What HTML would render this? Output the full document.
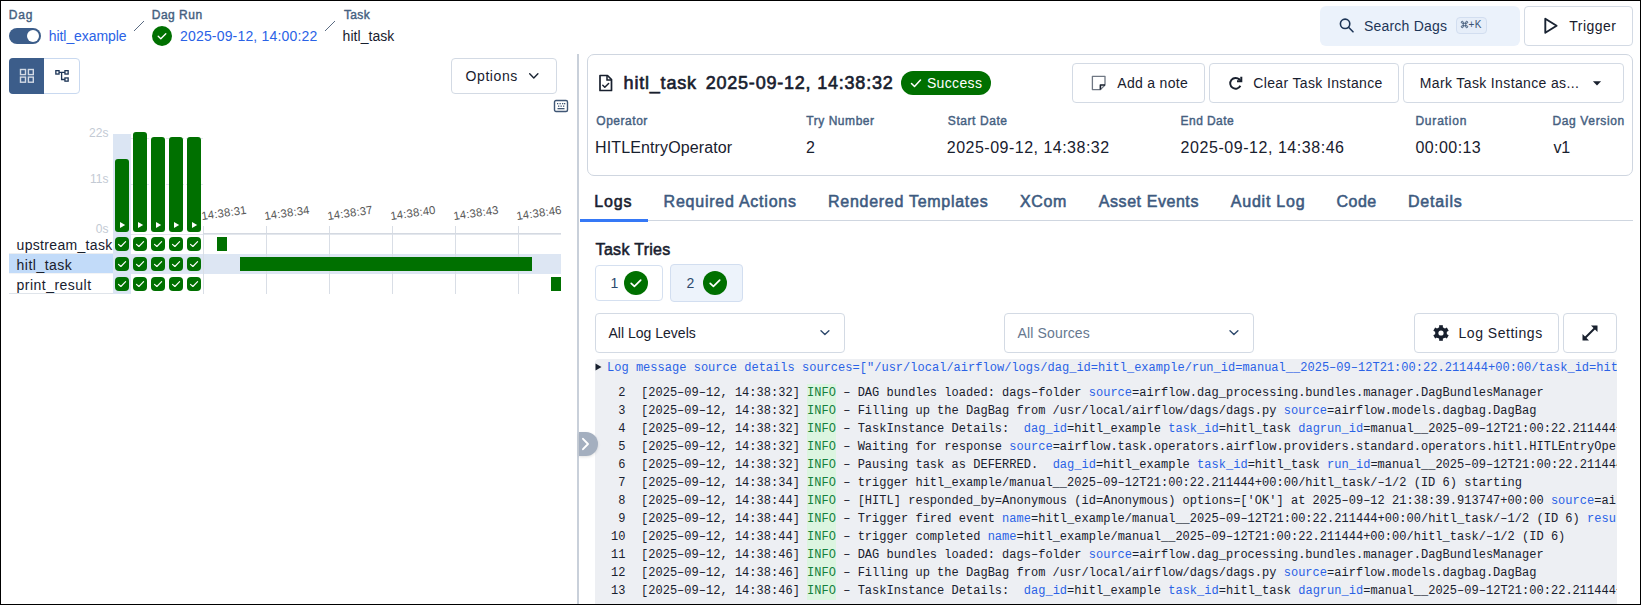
<!DOCTYPE html>
<html><head><meta charset="utf-8"><title>Airflow</title>
<style>
html,body{margin:0;padding:0;background:#fff;}
body{width:1641px;height:605px;overflow:hidden;position:relative;font-family:'Liberation Sans', sans-serif;}
.t{position:absolute;white-space:nowrap;}
.b{position:absolute;}
svg.b{overflow:visible;}
</style></head><body>
<div class="t" style="left:8.80px;top:8.84px;font-size:12px;line-height:12px;color:#45607f;font-weight:400;font-family:'Liberation Sans', sans-serif;letter-spacing:0.750px;-webkit-text-stroke:0.41px #45607f;">Dag</div>
<div class="b" style="left:9px;top:28px;width:32px;height:16px;background:#3c5d8a;border-radius:8px;"></div>
<div class="b" style="left:27px;top:30px;width:12px;height:12px;background:#fff;border-radius:50%;"></div>
<div class="t" style="left:48.80px;top:28.95px;font-size:14px;line-height:14px;color:#2a62e6;font-weight:400;font-family:'Liberation Sans', sans-serif;letter-spacing:-0.073px;">hitl_example</div>
<svg class="b" style="left:132px;top:19px;" width="14" height="14" viewBox="0 0 14 14"><line x1="2" y1="12" x2="12" y2="2" stroke="#5a6b82" stroke-width="1"/></svg>
<div class="t" style="left:151.80px;top:8.84px;font-size:12px;line-height:12px;color:#45607f;font-weight:400;font-family:'Liberation Sans', sans-serif;letter-spacing:0.483px;-webkit-text-stroke:0.41px #45607f;">Dag Run</div>
<svg class="b" style="left:152px;top:26px;" width="20" height="20" viewBox="0 0 20 20"><circle cx="10" cy="10" r="10" fill="#007000"/><path d="M6.2 10.3l2.6 2.5 5-5" fill="none" stroke="#fff" stroke-width="1.35" stroke-linecap="round" stroke-linejoin="round"/></svg>
<div class="t" style="left:180.00px;top:28.95px;font-size:14px;line-height:14px;color:#2a62e6;font-weight:400;font-family:'Liberation Sans', sans-serif;letter-spacing:0.174px;">2025-09-12, 14:00:22</div>
<svg class="b" style="left:323px;top:19px;" width="14" height="14" viewBox="0 0 14 14"><line x1="2" y1="12" x2="12" y2="2" stroke="#5a6b82" stroke-width="1"/></svg>
<div class="t" style="left:344.00px;top:8.84px;font-size:12px;line-height:12px;color:#45607f;font-weight:400;font-family:'Liberation Sans', sans-serif;letter-spacing:0.333px;-webkit-text-stroke:0.41px #45607f;">Task</div>
<div class="t" style="left:342.60px;top:28.95px;font-size:14px;line-height:14px;color:#18202e;font-weight:400;font-family:'Liberation Sans', sans-serif;letter-spacing:0.050px;">hitl_task</div>
<div class="b" style="left:1320px;top:6px;width:200px;height:40px;background:#ebf2fb;border-radius:6px;"></div>
<svg class="b" style="left:1338px;top:17px;" width="16" height="16" viewBox="0 0 16 16"><circle cx="7.1" cy="6.8" r="4.7" fill="none" stroke="#1d3557" stroke-width="1.6"/><line x1="10.5" y1="10.3" x2="15" y2="14.8" stroke="#1d3557" stroke-width="1.6" stroke-linecap="round"/></svg>
<div class="t" style="left:1364.00px;top:18.75px;font-size:14px;line-height:14px;color:#1d3557;font-weight:400;font-family:'Liberation Sans', sans-serif;letter-spacing:0.200px;">Search Dags</div>
<div class="b" style="left:1456px;top:17px;width:31px;height:17px;background:#e6eef9;border:1px solid #d2def0;border-radius:4px;box-sizing:border-box;"></div>
<svg class="b" style="left:1461px;top:20.5px;" width="7" height="7" viewBox="0 0 7 7"><g fill="none" stroke="#3a5272" stroke-width="0.9"><rect x="2.2" y="2.2" width="2.6" height="2.6"/><circle cx="1.3" cy="1.3" r="1"/><circle cx="5.7" cy="1.3" r="1"/><circle cx="1.3" cy="5.7" r="1"/><circle cx="5.7" cy="5.7" r="1"/></g></svg>
<div class="t" style="left:1468.60px;top:20.34px;font-size:10px;line-height:10px;color:#3a5272;font-weight:400;font-family:'Liberation Sans', sans-serif;letter-spacing:0.200px;">+K</div>
<div class="b" style="left:1524px;top:6px;width:109px;height:40px;background:#fff;border:1px solid #d3dae4;border-radius:4px;box-sizing:border-box;"></div>
<svg class="b" style="left:1543px;top:17px;" width="16" height="18" viewBox="0 0 16 18"><path d="M2.3 1.8 L13.6 8.8 L2.3 15.8 Z" fill="none" stroke="#1a2433" stroke-width="1.9" stroke-linejoin="round"/></svg>
<div class="t" style="left:1569.30px;top:18.95px;font-size:14px;line-height:14px;color:#18202e;font-weight:400;font-family:'Liberation Sans', sans-serif;letter-spacing:0.450px;">Trigger</div>
<div class="b" style="left:9px;top:58px;width:71px;height:36px;border:1px solid #c9d9f0;border-radius:4px;box-sizing:border-box;background:#fff;"></div>
<div class="b" style="left:9px;top:58px;width:35px;height:36px;background:#3c5d8a;border-radius:4px 0 0 4px;"></div>
<svg class="b" style="left:19px;top:68px;" width="16" height="16" viewBox="0 0 16 16"><g fill="none" stroke="#d3dae5" stroke-width="1.4"><rect x="1.5" y="1.5" width="5" height="5.1"/><rect x="9.4" y="1.5" width="4.9" height="5.1"/><rect x="1.5" y="9.1" width="5" height="5.1"/><rect x="9.4" y="9.1" width="4.9" height="5.1"/></g></svg>
<svg class="b" style="left:54px;top:69px;" width="16" height="14" viewBox="0 0 16 14"><g fill="none" stroke="#1d3557" stroke-width="1.3"><rect x="1.85" y="1.65" width="3.2" height="3.4"/><rect x="10.95" y="1.65" width="3.2" height="3.4"/><rect x="10.95" y="8.95" width="3.2" height="3.2"/><path d="M5.05 3.3H10.95M7.6 3.3V10.5H10.95"/></g></svg>
<div class="b" style="left:451px;top:58px;width:106px;height:36px;background:#fff;border:1px solid #d3dae4;border-radius:4px;box-sizing:border-box;"></div>
<div class="t" style="left:465.60px;top:69.15px;font-size:14px;line-height:14px;color:#18202e;font-weight:400;font-family:'Liberation Sans', sans-serif;letter-spacing:0.567px;">Options</div>
<svg class="b" style="left:527px;top:71px;" width="14" height="10" viewBox="0 0 14 10"><path d="M2.7 2.7L6.8 6.9L10.9 2.7" fill="none" stroke="#1a2433" stroke-width="1.4" stroke-linecap="round" stroke-linejoin="round"/></svg>
<svg class="b" style="left:553px;top:99px;" width="16" height="14" viewBox="0 0 16 14"><rect x="1.5" y="1.5" width="13" height="11" rx="1.5" fill="none" stroke="#3f5675" stroke-width="1.4"/><g fill="#3f5675"><rect x="4" y="4" width="1.3" height="1.3"/><rect x="6.5" y="4" width="1.3" height="1.3"/><rect x="9" y="4" width="1.3" height="1.3"/><rect x="11" y="4" width="1.3" height="1.3"/><rect x="5" y="6.5" width="1.3" height="1.3"/><rect x="7.5" y="6.5" width="1.3" height="1.3"/><rect x="10" y="6.5" width="1.3" height="1.3"/><rect x="4.5" y="9" width="7" height="1.3"/></g></svg>
<div class="b" style="left:577px;top:54px;width:2px;height:551px;background:#c9d0da;"></div>
<div class="t" style="right:1532.6px;top:127.14px;font-size:12px;line-height:12px;color:#c3cad4;font-family:'Liberation Sans', sans-serif;">22s</div>
<div class="t" style="right:1532.6px;top:172.94px;font-size:12px;line-height:12px;color:#c3cad4;font-family:'Liberation Sans', sans-serif;">11s</div>
<div class="t" style="right:1532.6px;top:222.54px;font-size:12px;line-height:12px;color:#c3cad4;font-family:'Liberation Sans', sans-serif;">0s</div>
<div class="b" style="left:131px;top:138px;width:72px;height:1px;background:repeating-linear-gradient(90deg,#e3e7ed 0 3px,transparent 3px 5px);"></div>
<div class="b" style="left:131px;top:184px;width:72px;height:1px;background:repeating-linear-gradient(90deg,#e3e7ed 0 3px,transparent 3px 5px);"></div>
<div class="b" style="left:113px;top:134px;width:18px;height:160px;background:#dbe5f3;"></div>
<div class="b" style="left:131px;top:254px;width:430px;height:20px;background:#dde6f3;"></div>
<div class="b" style="left:9px;top:254px;width:104px;height:20px;background:#c2dbf9;"></div>
<div class="b" style="left:9px;top:293px;width:104px;height:1px;background:#dfe4ea;"></div>
<div class="b" style="left:9px;top:253px;width:104px;height:1px;background:#eceef1;"></div>
<div class="b" style="left:9px;top:273px;width:104px;height:1px;background:#f3f4f6;"></div>
<div class="b" style="left:131px;top:234px;width:430px;height:1px;background:#e3e7ed;"></div>
<div class="b" style="left:115px;top:159px;width:14px;height:72.6px;background:#007000;border-radius:3px;"></div>
<svg class="b" style="left:120px;top:222px;" width="6" height="7" viewBox="0 0 6 7"><path d="M0 0L5.2 3L0 6Z" fill="#fff"/></svg>
<div class="b" style="left:133px;top:132px;width:14px;height:99.6px;background:#007000;border-radius:3px;"></div>
<svg class="b" style="left:138px;top:222px;" width="6" height="7" viewBox="0 0 6 7"><path d="M0 0L5.2 3L0 6Z" fill="#fff"/></svg>
<div class="b" style="left:151px;top:137px;width:14px;height:94.6px;background:#007000;border-radius:3px;"></div>
<svg class="b" style="left:156px;top:222px;" width="6" height="7" viewBox="0 0 6 7"><path d="M0 0L5.2 3L0 6Z" fill="#fff"/></svg>
<div class="b" style="left:169px;top:137px;width:14px;height:94.6px;background:#007000;border-radius:3px;"></div>
<svg class="b" style="left:174px;top:222px;" width="6" height="7" viewBox="0 0 6 7"><path d="M0 0L5.2 3L0 6Z" fill="#fff"/></svg>
<div class="b" style="left:187px;top:137px;width:14px;height:94.6px;background:#007000;border-radius:3px;"></div>
<svg class="b" style="left:192px;top:222px;" width="6" height="7" viewBox="0 0 6 7"><path d="M0 0L5.2 3L0 6Z" fill="#fff"/></svg>
<svg class="b" style="left:115px;top:237px;" width="14" height="14" viewBox="0 0 14 14"><rect width="14" height="14" rx="4" fill="#007000"/><path d="M3.5 7.3l2.4 2.2 4.7-4.8" fill="none" stroke="#fff" stroke-width="1.15" stroke-linecap="round" stroke-linejoin="round"/></svg>
<svg class="b" style="left:133px;top:237px;" width="14" height="14" viewBox="0 0 14 14"><rect width="14" height="14" rx="4" fill="#007000"/><path d="M3.5 7.3l2.4 2.2 4.7-4.8" fill="none" stroke="#fff" stroke-width="1.15" stroke-linecap="round" stroke-linejoin="round"/></svg>
<svg class="b" style="left:151px;top:237px;" width="14" height="14" viewBox="0 0 14 14"><rect width="14" height="14" rx="4" fill="#007000"/><path d="M3.5 7.3l2.4 2.2 4.7-4.8" fill="none" stroke="#fff" stroke-width="1.15" stroke-linecap="round" stroke-linejoin="round"/></svg>
<svg class="b" style="left:169px;top:237px;" width="14" height="14" viewBox="0 0 14 14"><rect width="14" height="14" rx="4" fill="#007000"/><path d="M3.5 7.3l2.4 2.2 4.7-4.8" fill="none" stroke="#fff" stroke-width="1.15" stroke-linecap="round" stroke-linejoin="round"/></svg>
<svg class="b" style="left:187px;top:237px;" width="14" height="14" viewBox="0 0 14 14"><rect width="14" height="14" rx="4" fill="#007000"/><path d="M3.5 7.3l2.4 2.2 4.7-4.8" fill="none" stroke="#fff" stroke-width="1.15" stroke-linecap="round" stroke-linejoin="round"/></svg>
<svg class="b" style="left:115px;top:257px;" width="14" height="14" viewBox="0 0 14 14"><rect width="14" height="14" rx="4" fill="#007000"/><path d="M3.5 7.3l2.4 2.2 4.7-4.8" fill="none" stroke="#fff" stroke-width="1.15" stroke-linecap="round" stroke-linejoin="round"/></svg>
<svg class="b" style="left:133px;top:257px;" width="14" height="14" viewBox="0 0 14 14"><rect width="14" height="14" rx="4" fill="#007000"/><path d="M3.5 7.3l2.4 2.2 4.7-4.8" fill="none" stroke="#fff" stroke-width="1.15" stroke-linecap="round" stroke-linejoin="round"/></svg>
<svg class="b" style="left:151px;top:257px;" width="14" height="14" viewBox="0 0 14 14"><rect width="14" height="14" rx="4" fill="#007000"/><path d="M3.5 7.3l2.4 2.2 4.7-4.8" fill="none" stroke="#fff" stroke-width="1.15" stroke-linecap="round" stroke-linejoin="round"/></svg>
<svg class="b" style="left:169px;top:257px;" width="14" height="14" viewBox="0 0 14 14"><rect width="14" height="14" rx="4" fill="#007000"/><path d="M3.5 7.3l2.4 2.2 4.7-4.8" fill="none" stroke="#fff" stroke-width="1.15" stroke-linecap="round" stroke-linejoin="round"/></svg>
<svg class="b" style="left:187px;top:257px;" width="14" height="14" viewBox="0 0 14 14"><rect width="14" height="14" rx="4" fill="#007000"/><path d="M3.5 7.3l2.4 2.2 4.7-4.8" fill="none" stroke="#fff" stroke-width="1.15" stroke-linecap="round" stroke-linejoin="round"/></svg>
<svg class="b" style="left:115px;top:277px;" width="14" height="14" viewBox="0 0 14 14"><rect width="14" height="14" rx="4" fill="#007000"/><path d="M3.5 7.3l2.4 2.2 4.7-4.8" fill="none" stroke="#fff" stroke-width="1.15" stroke-linecap="round" stroke-linejoin="round"/></svg>
<svg class="b" style="left:133px;top:277px;" width="14" height="14" viewBox="0 0 14 14"><rect width="14" height="14" rx="4" fill="#007000"/><path d="M3.5 7.3l2.4 2.2 4.7-4.8" fill="none" stroke="#fff" stroke-width="1.15" stroke-linecap="round" stroke-linejoin="round"/></svg>
<svg class="b" style="left:151px;top:277px;" width="14" height="14" viewBox="0 0 14 14"><rect width="14" height="14" rx="4" fill="#007000"/><path d="M3.5 7.3l2.4 2.2 4.7-4.8" fill="none" stroke="#fff" stroke-width="1.15" stroke-linecap="round" stroke-linejoin="round"/></svg>
<svg class="b" style="left:169px;top:277px;" width="14" height="14" viewBox="0 0 14 14"><rect width="14" height="14" rx="4" fill="#007000"/><path d="M3.5 7.3l2.4 2.2 4.7-4.8" fill="none" stroke="#fff" stroke-width="1.15" stroke-linecap="round" stroke-linejoin="round"/></svg>
<svg class="b" style="left:187px;top:277px;" width="14" height="14" viewBox="0 0 14 14"><rect width="14" height="14" rx="4" fill="#007000"/><path d="M3.5 7.3l2.4 2.2 4.7-4.8" fill="none" stroke="#fff" stroke-width="1.15" stroke-linecap="round" stroke-linejoin="round"/></svg>
<div class="t" style="left:16.60px;top:237.85px;font-size:14px;line-height:14px;color:#18202e;font-weight:400;font-family:'Liberation Sans', sans-serif;letter-spacing:0.317px;">upstream_task</div>
<div class="t" style="left:16.60px;top:257.85px;font-size:14px;line-height:14px;color:#18202e;font-weight:400;font-family:'Liberation Sans', sans-serif;letter-spacing:0.475px;">hitl_task</div>
<div class="t" style="left:16.60px;top:277.65px;font-size:14px;line-height:14px;color:#18202e;font-weight:400;font-family:'Liberation Sans', sans-serif;letter-spacing:0.473px;">print_result</div>
<div class="b" style="left:203px;top:226px;width:1px;height:68px;background:#d9dee6;"></div>
<div class="b" style="left:266px;top:226px;width:1px;height:68px;background:#d9dee6;"></div>
<div class="b" style="left:329px;top:226px;width:1px;height:68px;background:#d9dee6;"></div>
<div class="b" style="left:392px;top:226px;width:1px;height:68px;background:#d9dee6;"></div>
<div class="b" style="left:455px;top:226px;width:1px;height:68px;background:#d9dee6;"></div>
<div class="b" style="left:518px;top:226px;width:1px;height:68px;background:#d9dee6;"></div>
<div class="b" style="left:203px;top:233px;width:358px;height:1px;background:#d4d9e1;"></div>
<div class="b" style="left:217px;top:237px;width:10px;height:14px;background:#007000;"></div>
<div class="b" style="left:240px;top:257px;width:292px;height:14px;background:#007000;"></div>
<div class="b" style="left:551px;top:277px;width:10px;height:14px;background:#007000;"></div>
<div class="t" style="left:202px;top:210.97px;font-size:11.5px;line-height:11.5px;color:#585858;letter-spacing:0.1px;font-family:'Liberation Sans', sans-serif;transform-origin:0 9.73px;transform:rotate(-8deg);">14:38:31</div>
<div class="t" style="left:265px;top:210.97px;font-size:11.5px;line-height:11.5px;color:#585858;letter-spacing:0.1px;font-family:'Liberation Sans', sans-serif;transform-origin:0 9.73px;transform:rotate(-8deg);">14:38:34</div>
<div class="t" style="left:328px;top:210.97px;font-size:11.5px;line-height:11.5px;color:#585858;letter-spacing:0.1px;font-family:'Liberation Sans', sans-serif;transform-origin:0 9.73px;transform:rotate(-8deg);">14:38:37</div>
<div class="t" style="left:391px;top:210.97px;font-size:11.5px;line-height:11.5px;color:#585858;letter-spacing:0.1px;font-family:'Liberation Sans', sans-serif;transform-origin:0 9.73px;transform:rotate(-8deg);">14:38:40</div>
<div class="t" style="left:454px;top:210.97px;font-size:11.5px;line-height:11.5px;color:#585858;letter-spacing:0.1px;font-family:'Liberation Sans', sans-serif;transform-origin:0 9.73px;transform:rotate(-8deg);">14:38:43</div>
<div class="t" style="left:517px;top:210.97px;font-size:11.5px;line-height:11.5px;color:#585858;letter-spacing:0.1px;font-family:'Liberation Sans', sans-serif;transform-origin:0 9.73px;transform:rotate(-8deg);">14:38:46</div>
<div class="b" style="left:587px;top:54px;width:1046px;height:122px;border:1px solid #cfd6e0;border-radius:7px;box-sizing:border-box;"></div>
<svg class="b" style="left:597px;top:73px;" width="18" height="20" viewBox="0 0 18 20"><path d="M3 2.5h7.5l4 4v11h-11.5z" fill="none" stroke="#18202e" stroke-width="1.7" stroke-linejoin="round"/><path d="M10 2.5v4.5h4.5" fill="none" stroke="#18202e" stroke-width="1.5"/><path d="M5.8 12.3l2 2 3.8-3.8" fill="none" stroke="#18202e" stroke-width="1.5" stroke-linecap="round" stroke-linejoin="round"/></svg>
<div class="t" style="left:623.60px;top:74.06px;font-size:18px;line-height:18px;color:#18202e;font-weight:400;font-family:'Liberation Sans', sans-serif;letter-spacing:0.800px;-webkit-text-stroke:0.62px #18202e;">hitl_task</div>
<div class="t" style="left:705.70px;top:74.06px;font-size:18px;line-height:18px;color:#18202e;font-weight:400;font-family:'Liberation Sans', sans-serif;letter-spacing:0.784px;-webkit-text-stroke:0.62px #18202e;">2025-09-12, 14:38:32</div>
<div class="b" style="left:901px;top:71px;width:90px;height:24px;background:#007000;border-radius:12px;"></div>
<svg class="b" style="left:909px;top:76px;" width="14" height="14" viewBox="0 0 14 14"><path d="M2.5 7.5l3 3 6-6.5" fill="none" stroke="#fff" stroke-width="1.5" stroke-linecap="round" stroke-linejoin="round"/></svg>
<div class="t" style="left:926.90px;top:76.05px;font-size:14px;line-height:14px;color:#fff;font-weight:400;font-family:'Liberation Sans', sans-serif;letter-spacing:0.350px;">Success</div>
<div class="b" style="left:1072px;top:63px;width:133px;height:40px;background:#fff;border:1px solid #d3dae4;border-radius:4px;box-sizing:border-box;"></div>
<svg class="b" style="left:1090px;top:74px;" width="18" height="18" viewBox="0 0 18 18"><path d="M2.4 2.3h12.6v8.7l-4.6 4.6h-8z" fill="none" stroke="#6f7783" stroke-width="1.3" stroke-linejoin="round"/><path d="M15 11h-4.6v4.6" fill="none" stroke="#18202e" stroke-width="1.6" stroke-linejoin="round"/></svg>
<div class="t" style="left:1117.30px;top:75.85px;font-size:14px;line-height:14px;color:#18202e;font-weight:400;font-family:'Liberation Sans', sans-serif;letter-spacing:0.300px;">Add a note</div>
<div class="b" style="left:1209px;top:63px;width:190px;height:40px;background:#fff;border:1px solid #d3dae4;border-radius:4px;box-sizing:border-box;"></div>
<svg class="b" style="left:1228px;top:75px;" width="16" height="16" viewBox="0 0 16 16"><path d="M11.5 4.6A5.4 5.4 0 1 0 12.4 10.8" fill="none" stroke="#18202e" stroke-width="1.9"/><path d="M13.3 1.8V6.3H9" fill="none" stroke="#18202e" stroke-width="2" stroke-linejoin="miter"/><path d="M13.3 6.3L10.5 3.5" stroke="#18202e" stroke-width="1.5"/></svg>
<div class="t" style="left:1253.30px;top:75.85px;font-size:14px;line-height:14px;color:#18202e;font-weight:400;font-family:'Liberation Sans', sans-serif;letter-spacing:0.350px;">Clear Task Instance</div>
<div class="b" style="left:1403px;top:63px;width:221px;height:40px;background:#fff;border:1px solid #d3dae4;border-radius:4px;box-sizing:border-box;"></div>
<div class="t" style="left:1419.80px;top:75.85px;font-size:14px;line-height:14px;color:#18202e;font-weight:400;font-family:'Liberation Sans', sans-serif;letter-spacing:0.365px;">Mark Task Instance as...</div>
<svg class="b" style="left:1591px;top:79px;" width="12" height="8" viewBox="0 0 12 8"><path d="M1.9 2.2h8.2l-4.1 4.4z" fill="#18202e"/></svg>
<div class="t" style="left:596.30px;top:114.64px;font-size:12px;line-height:12px;color:#45607f;font-weight:400;font-family:'Liberation Sans', sans-serif;letter-spacing:0.529px;-webkit-text-stroke:0.41px #45607f;">Operator</div>
<div class="t" style="left:595.00px;top:139.66px;font-size:16px;line-height:16px;color:#18202e;font-weight:400;font-family:'Liberation Sans', sans-serif;letter-spacing:0.125px;">HITLEntryOperator</div>
<div class="t" style="left:806.20px;top:114.64px;font-size:12px;line-height:12px;color:#45607f;font-weight:400;font-family:'Liberation Sans', sans-serif;letter-spacing:0.556px;-webkit-text-stroke:0.41px #45607f;">Try Number</div>
<div class="t" style="left:806.00px;top:139.66px;font-size:16px;line-height:16px;color:#18202e;font-weight:400;font-family:'Liberation Sans', sans-serif;">2</div>
<div class="t" style="left:947.80px;top:114.64px;font-size:12px;line-height:12px;color:#45607f;font-weight:400;font-family:'Liberation Sans', sans-serif;letter-spacing:0.578px;-webkit-text-stroke:0.41px #45607f;">Start Date</div>
<div class="t" style="left:946.80px;top:139.66px;font-size:16px;line-height:16px;color:#18202e;font-weight:400;font-family:'Liberation Sans', sans-serif;letter-spacing:0.489px;">2025-09-12, 14:38:32</div>
<div class="t" style="left:1180.60px;top:114.64px;font-size:12px;line-height:12px;color:#45607f;font-weight:400;font-family:'Liberation Sans', sans-serif;letter-spacing:0.429px;-webkit-text-stroke:0.41px #45607f;">End Date</div>
<div class="t" style="left:1180.60px;top:139.66px;font-size:16px;line-height:16px;color:#18202e;font-weight:400;font-family:'Liberation Sans', sans-serif;letter-spacing:0.547px;">2025-09-12, 14:38:46</div>
<div class="t" style="left:1415.40px;top:114.64px;font-size:12px;line-height:12px;color:#45607f;font-weight:400;font-family:'Liberation Sans', sans-serif;letter-spacing:0.800px;-webkit-text-stroke:0.41px #45607f;">Duration</div>
<div class="t" style="left:1415.40px;top:139.66px;font-size:16px;line-height:16px;color:#18202e;font-weight:400;font-family:'Liberation Sans', sans-serif;letter-spacing:0.443px;">00:00:13</div>
<div class="t" style="left:1552.50px;top:114.64px;font-size:12px;line-height:12px;color:#45607f;font-weight:400;font-family:'Liberation Sans', sans-serif;letter-spacing:0.630px;-webkit-text-stroke:0.41px #45607f;">Dag Version</div>
<div class="t" style="left:1553.50px;top:139.66px;font-size:16px;line-height:16px;color:#18202e;font-weight:400;font-family:'Liberation Sans', sans-serif;letter-spacing:-0.300px;">v1</div>
<div class="b" style="left:580px;top:220px;width:1053px;height:1px;background:#cfd6e0;"></div>
<div class="b" style="left:580px;top:219px;width:68px;height:3px;background:#3578f6;"></div>
<div class="t" style="left:594.20px;top:193.56px;font-size:16px;line-height:16px;color:#18202e;font-weight:400;font-family:'Liberation Sans', sans-serif;letter-spacing:0.867px;-webkit-text-stroke:0.55px #18202e;">Logs</div>
<div class="t" style="left:663.60px;top:193.56px;font-size:16px;line-height:16px;color:#3d5a80;font-weight:400;font-family:'Liberation Sans', sans-serif;letter-spacing:0.760px;-webkit-text-stroke:0.55px #3d5a80;">Required Actions</div>
<div class="t" style="left:828.00px;top:193.56px;font-size:16px;line-height:16px;color:#3d5a80;font-weight:400;font-family:'Liberation Sans', sans-serif;letter-spacing:0.724px;-webkit-text-stroke:0.55px #3d5a80;">Rendered Templates</div>
<div class="t" style="left:1020.00px;top:193.56px;font-size:16px;line-height:16px;color:#3d5a80;font-weight:400;font-family:'Liberation Sans', sans-serif;letter-spacing:0.600px;-webkit-text-stroke:0.55px #3d5a80;">XCom</div>
<div class="t" style="left:1098.80px;top:193.56px;font-size:16px;line-height:16px;color:#3d5a80;font-weight:400;font-family:'Liberation Sans', sans-serif;letter-spacing:0.564px;-webkit-text-stroke:0.55px #3d5a80;">Asset Events</div>
<div class="t" style="left:1230.80px;top:193.56px;font-size:16px;line-height:16px;color:#3d5a80;font-weight:400;font-family:'Liberation Sans', sans-serif;letter-spacing:0.775px;-webkit-text-stroke:0.55px #3d5a80;">Audit Log</div>
<div class="t" style="left:1336.40px;top:193.56px;font-size:16px;line-height:16px;color:#3d5a80;font-weight:400;font-family:'Liberation Sans', sans-serif;letter-spacing:0.533px;-webkit-text-stroke:0.55px #3d5a80;">Code</div>
<div class="t" style="left:1407.90px;top:193.56px;font-size:16px;line-height:16px;color:#3d5a80;font-weight:400;font-family:'Liberation Sans', sans-serif;letter-spacing:0.833px;-webkit-text-stroke:0.55px #3d5a80;">Details</div>
<div class="t" style="left:595.60px;top:242.06px;font-size:16px;line-height:16px;color:#18202e;font-weight:400;font-family:'Liberation Sans', sans-serif;letter-spacing:0.300px;-webkit-text-stroke:0.55px #18202e;">Task Tries</div>
<div class="b" style="left:595px;top:265px;width:68px;height:36px;background:#fff;border:1px solid #d5e0f0;border-radius:4px;box-sizing:border-box;"></div>
<div class="t" style="left:610.50px;top:276.45px;font-size:14px;line-height:14px;color:#2d4a6e;font-weight:400;font-family:'Liberation Sans', sans-serif;">1</div>
<svg class="b" style="left:624px;top:271px;" width="24" height="24" viewBox="0 0 24 24"><circle cx="12" cy="12" r="12" fill="#007000"/><path d="M7.2 12.4l3.2 3 6.3-6.3" fill="none" stroke="#fff" stroke-width="1.7" stroke-linecap="round" stroke-linejoin="round"/></svg>
<div class="b" style="left:670px;top:264px;width:73px;height:38px;background:#edf3fb;border:1px solid #d2def0;border-radius:4px;box-sizing:border-box;"></div>
<div class="t" style="left:686.50px;top:276.45px;font-size:14px;line-height:14px;color:#2d4a6e;font-weight:400;font-family:'Liberation Sans', sans-serif;">2</div>
<svg class="b" style="left:703px;top:271px;" width="24" height="24" viewBox="0 0 24 24"><circle cx="12" cy="12" r="12" fill="#007000"/><path d="M7.2 12.4l3.2 3 6.3-6.3" fill="none" stroke="#fff" stroke-width="1.7" stroke-linecap="round" stroke-linejoin="round"/></svg>
<div class="b" style="left:595px;top:313px;width:250px;height:40px;background:#fff;border:1px solid #d3dae4;border-radius:4px;box-sizing:border-box;"></div>
<div class="t" style="left:608.50px;top:326.35px;font-size:14px;line-height:14px;color:#18202e;font-weight:400;font-family:'Liberation Sans', sans-serif;letter-spacing:0.008px;">All Log Levels</div>
<svg class="b" style="left:818px;top:327px;" width="14" height="10" viewBox="0 0 14 10"><path d="M3 3.7L6.9 7.5L10.9 3.7" fill="none" stroke="#2f4a6d" stroke-width="1.4" stroke-linecap="round" stroke-linejoin="round"/></svg>
<div class="b" style="left:1004px;top:313px;width:250px;height:40px;background:#fff;border:1px solid #d3dae4;border-radius:4px;box-sizing:border-box;"></div>
<div class="t" style="left:1017.60px;top:326.35px;font-size:14px;line-height:14px;color:#66788f;font-weight:400;font-family:'Liberation Sans', sans-serif;letter-spacing:0.140px;">All Sources</div>
<svg class="b" style="left:1227px;top:327px;" width="14" height="10" viewBox="0 0 14 10"><path d="M3 3.7L6.9 7.5L10.9 3.7" fill="none" stroke="#2f4a6d" stroke-width="1.4" stroke-linecap="round" stroke-linejoin="round"/></svg>
<div class="b" style="left:1414px;top:313px;width:145px;height:40px;background:#fff;border:1px solid #d3dae4;border-radius:4px;box-sizing:border-box;"></div>
<svg class="b" style="left:1433px;top:325px;" width="16" height="16" viewBox="0 0 16 16"><g fill="#18202e"><circle cx="8" cy="8" r="5.9"/><rect x="6.15" y="0.2" width="3.7" height="4" transform="rotate(0 8 8)"/><rect x="6.15" y="0.2" width="3.7" height="4" transform="rotate(60 8 8)"/><rect x="6.15" y="0.2" width="3.7" height="4" transform="rotate(120 8 8)"/><rect x="6.15" y="0.2" width="3.7" height="4" transform="rotate(180 8 8)"/><rect x="6.15" y="0.2" width="3.7" height="4" transform="rotate(240 8 8)"/><rect x="6.15" y="0.2" width="3.7" height="4" transform="rotate(300 8 8)"/></g><circle cx="8" cy="8" r="2.6" fill="#fff"/></svg>
<div class="t" style="left:1458.50px;top:326.15px;font-size:14px;line-height:14px;color:#18202e;font-weight:400;font-family:'Liberation Sans', sans-serif;letter-spacing:0.527px;">Log Settings</div>
<div class="b" style="left:1563px;top:313px;width:54px;height:40px;background:#fff;border:1px solid #d3dae4;border-radius:4px;box-sizing:border-box;"></div>
<svg class="b" style="left:1580px;top:323px;" width="20" height="20" viewBox="0 0 20 20"><path d="M3.5 16.5L16.5 3.5" stroke="#18202e" stroke-width="2"/><path d="M11 2.5h6.5V9z" fill="#18202e"/><path d="M2.5 11v6.5H9z" fill="#18202e"/></svg>
<div class="b" style="left:595px;top:359px;width:1022px;height:260px;background:#edeff3;border-radius:4px;overflow:hidden;">
<svg class="b" style="left:0px;top:363px;margin-top:-359px;" width="7" height="8" viewBox="0 0 7 8"><path d="M0.5 0.5L6.5 4L0.5 7.5Z" fill="#18202e"/></svg>
<div class="t" style="left:12px;top:-0.20px;font-size:12px;line-height:18px;color:#2a62e6;font-family:'Liberation Mono', monospace;letter-spacing:0.02px;white-space:pre;">Log message source details sources=[&quot;/usr/local/airflow/logs/dag_id=hitl_example/run_id=manual__2025&#8211;09&#8211;12T21:00:22.211444+00:00/task_id=hitl_task/attempt=2.log&quot;]</div>
<div class="t" style="right:991.5px;top:24.80px;font-size:12px;line-height:18px;color:#18202e;font-family:'Liberation Mono', monospace;">2</div>
<div class="t" style="left:46px;top:24.80px;font-size:12px;line-height:18px;color:#18202e;font-family:'Liberation Mono', monospace;letter-spacing:0.02px;white-space:pre;">[2025&#8211;09&#8211;12, 14:38:32] <span style="color:#15803d;background:#dcf5e0;display:inline-block;line-height:18px;">INFO</span> &#8211; DAG bundles loaded: dags&#8211;folder <span style="color:#2a62e6">source</span>=airflow.dag_processing.bundles.manager.DagBundlesManager</div>
<div class="t" style="right:991.5px;top:42.80px;font-size:12px;line-height:18px;color:#18202e;font-family:'Liberation Mono', monospace;">3</div>
<div class="t" style="left:46px;top:42.80px;font-size:12px;line-height:18px;color:#18202e;font-family:'Liberation Mono', monospace;letter-spacing:0.02px;white-space:pre;">[2025&#8211;09&#8211;12, 14:38:32] <span style="color:#15803d;background:#dcf5e0;display:inline-block;line-height:18px;">INFO</span> &#8211; Filling up the DagBag from /usr/local/airflow/dags/dags.py <span style="color:#2a62e6">source</span>=airflow.models.dagbag.DagBag</div>
<div class="t" style="right:991.5px;top:60.80px;font-size:12px;line-height:18px;color:#18202e;font-family:'Liberation Mono', monospace;">4</div>
<div class="t" style="left:46px;top:60.80px;font-size:12px;line-height:18px;color:#18202e;font-family:'Liberation Mono', monospace;letter-spacing:0.02px;white-space:pre;">[2025&#8211;09&#8211;12, 14:38:32] <span style="color:#15803d;background:#dcf5e0;display:inline-block;line-height:18px;">INFO</span> &#8211; TaskInstance Details:  <span style="color:#2a62e6">dag_id</span>=hitl_example <span style="color:#2a62e6">task_id</span>=hitl_task <span style="color:#2a62e6">dagrun_id</span>=manual__2025&#8211;09&#8211;12T21:00:22.211444+00:00 <span style="color:#2a62e6">map_index</span>=&#8211;1</div>
<div class="t" style="right:991.5px;top:78.80px;font-size:12px;line-height:18px;color:#18202e;font-family:'Liberation Mono', monospace;">5</div>
<div class="t" style="left:46px;top:78.80px;font-size:12px;line-height:18px;color:#18202e;font-family:'Liberation Mono', monospace;letter-spacing:0.02px;white-space:pre;">[2025&#8211;09&#8211;12, 14:38:32] <span style="color:#15803d;background:#dcf5e0;display:inline-block;line-height:18px;">INFO</span> &#8211; Waiting for response <span style="color:#2a62e6">source</span>=airflow.task.operators.airflow.providers.standard.operators.hitl.HITLEntryOperator</div>
<div class="t" style="right:991.5px;top:96.80px;font-size:12px;line-height:18px;color:#18202e;font-family:'Liberation Mono', monospace;">6</div>
<div class="t" style="left:46px;top:96.80px;font-size:12px;line-height:18px;color:#18202e;font-family:'Liberation Mono', monospace;letter-spacing:0.02px;white-space:pre;">[2025&#8211;09&#8211;12, 14:38:32] <span style="color:#15803d;background:#dcf5e0;display:inline-block;line-height:18px;">INFO</span> &#8211; Pausing task as DEFERRED.  <span style="color:#2a62e6">dag_id</span>=hitl_example <span style="color:#2a62e6">task_id</span>=hitl_task <span style="color:#2a62e6">run_id</span>=manual__2025&#8211;09&#8211;12T21:00:22.211444+00:00</div>
<div class="t" style="right:991.5px;top:114.80px;font-size:12px;line-height:18px;color:#18202e;font-family:'Liberation Mono', monospace;">7</div>
<div class="t" style="left:46px;top:114.80px;font-size:12px;line-height:18px;color:#18202e;font-family:'Liberation Mono', monospace;letter-spacing:0.02px;white-space:pre;">[2025&#8211;09&#8211;12, 14:38:34] <span style="color:#15803d;background:#dcf5e0;display:inline-block;line-height:18px;">INFO</span> &#8211; trigger hitl_example/manual__2025&#8211;09&#8211;12T21:00:22.211444+00:00/hitl_task/&#8211;1/2 (ID 6) starting</div>
<div class="t" style="right:991.5px;top:132.80px;font-size:12px;line-height:18px;color:#18202e;font-family:'Liberation Mono', monospace;">8</div>
<div class="t" style="left:46px;top:132.80px;font-size:12px;line-height:18px;color:#18202e;font-family:'Liberation Mono', monospace;letter-spacing:0.02px;white-space:pre;">[2025&#8211;09&#8211;12, 14:38:44] <span style="color:#15803d;background:#dcf5e0;display:inline-block;line-height:18px;">INFO</span> &#8211; [HITL] responded_by=Anonymous (id=Anonymous) options=['OK'] at 2025&#8211;09&#8211;12 21:38:39.913747+00:00 <span style="color:#2a62e6">source</span>=airflow.triggers</div>
<div class="t" style="right:991.5px;top:150.80px;font-size:12px;line-height:18px;color:#18202e;font-family:'Liberation Mono', monospace;">9</div>
<div class="t" style="left:46px;top:150.80px;font-size:12px;line-height:18px;color:#18202e;font-family:'Liberation Mono', monospace;letter-spacing:0.02px;white-space:pre;">[2025&#8211;09&#8211;12, 14:38:44] <span style="color:#15803d;background:#dcf5e0;display:inline-block;line-height:18px;">INFO</span> &#8211; Trigger fired event <span style="color:#2a62e6">name</span>=hitl_example/manual__2025&#8211;09&#8211;12T21:00:22.211444+00:00/hitl_task/&#8211;1/2 (ID 6) <span style="color:#2a62e6">result</span>=TriggerEvent</div>
<div class="t" style="right:991.5px;top:168.80px;font-size:12px;line-height:18px;color:#18202e;font-family:'Liberation Mono', monospace;">10</div>
<div class="t" style="left:46px;top:168.80px;font-size:12px;line-height:18px;color:#18202e;font-family:'Liberation Mono', monospace;letter-spacing:0.02px;white-space:pre;">[2025&#8211;09&#8211;12, 14:38:44] <span style="color:#15803d;background:#dcf5e0;display:inline-block;line-height:18px;">INFO</span> &#8211; trigger completed <span style="color:#2a62e6">name</span>=hitl_example/manual__2025&#8211;09&#8211;12T21:00:22.211444+00:00/hitl_task/&#8211;1/2 (ID 6)</div>
<div class="t" style="right:991.5px;top:186.80px;font-size:12px;line-height:18px;color:#18202e;font-family:'Liberation Mono', monospace;">11</div>
<div class="t" style="left:46px;top:186.80px;font-size:12px;line-height:18px;color:#18202e;font-family:'Liberation Mono', monospace;letter-spacing:0.02px;white-space:pre;">[2025&#8211;09&#8211;12, 14:38:46] <span style="color:#15803d;background:#dcf5e0;display:inline-block;line-height:18px;">INFO</span> &#8211; DAG bundles loaded: dags&#8211;folder <span style="color:#2a62e6">source</span>=airflow.dag_processing.bundles.manager.DagBundlesManager</div>
<div class="t" style="right:991.5px;top:204.80px;font-size:12px;line-height:18px;color:#18202e;font-family:'Liberation Mono', monospace;">12</div>
<div class="t" style="left:46px;top:204.80px;font-size:12px;line-height:18px;color:#18202e;font-family:'Liberation Mono', monospace;letter-spacing:0.02px;white-space:pre;">[2025&#8211;09&#8211;12, 14:38:46] <span style="color:#15803d;background:#dcf5e0;display:inline-block;line-height:18px;">INFO</span> &#8211; Filling up the DagBag from /usr/local/airflow/dags/dags.py <span style="color:#2a62e6">source</span>=airflow.models.dagbag.DagBag</div>
<div class="t" style="right:991.5px;top:222.80px;font-size:12px;line-height:18px;color:#18202e;font-family:'Liberation Mono', monospace;">13</div>
<div class="t" style="left:46px;top:222.80px;font-size:12px;line-height:18px;color:#18202e;font-family:'Liberation Mono', monospace;letter-spacing:0.02px;white-space:pre;">[2025&#8211;09&#8211;12, 14:38:46] <span style="color:#15803d;background:#dcf5e0;display:inline-block;line-height:18px;">INFO</span> &#8211; TaskInstance Details:  <span style="color:#2a62e6">dag_id</span>=hitl_example <span style="color:#2a62e6">task_id</span>=hitl_task <span style="color:#2a62e6">dagrun_id</span>=manual__2025&#8211;09&#8211;12T21:00:22.211444+00:00 <span style="color:#2a62e6">map_index</span>=&#8211;1</div>
</div>
<div class="b" style="left:579px;top:432px;width:19px;height:24px;background:#a4afbf;border-radius:0 12px 12px 0;box-shadow:0 1px 3px rgba(0,0,0,0.12);"></div>
<svg class="b" style="left:581px;top:437px;" width="10" height="14" viewBox="0 0 10 14"><path d="M2 1.8l5 5.2-5 5.2" fill="none" stroke="#fff" stroke-width="1.9" stroke-linecap="round" stroke-linejoin="round"/></svg>
<div class="b" style="left:0;top:0;width:1641px;height:605px;border:1px solid #000;box-sizing:border-box;pointer-events:none;"></div>
</body></html>
